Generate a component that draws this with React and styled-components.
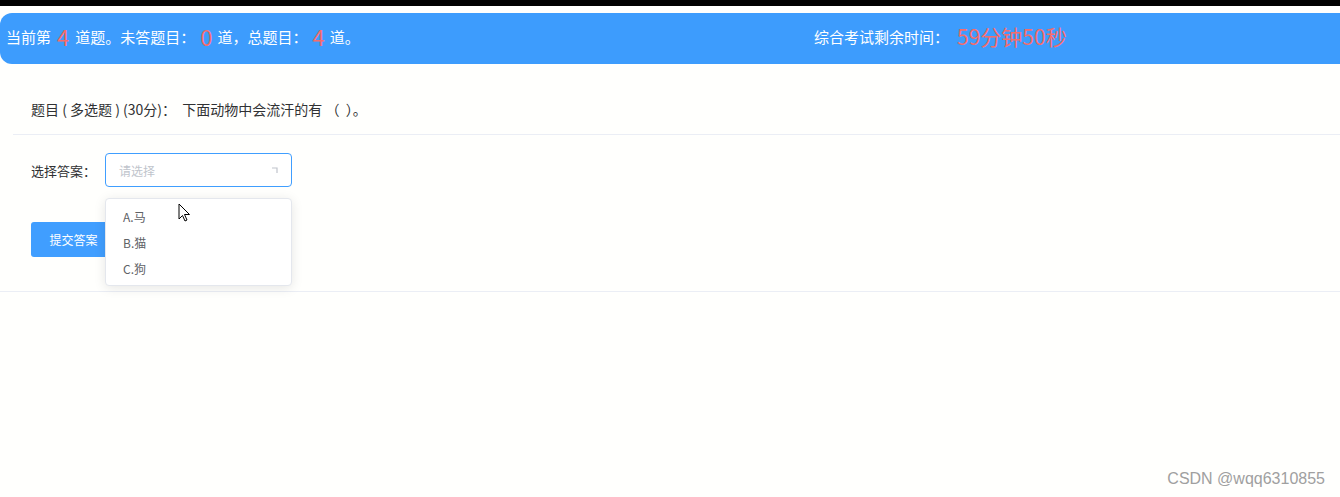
import React from 'react';
import styled, { createGlobalStyle } from 'styled-components';

const GlobalStyle = createGlobalStyle`
  body {
    margin: 0;
    background: #fff;
    font-family: "Noto Sans CJK SC", "Liberation Sans", sans-serif;
  }
`;

const Page = styled.div`
  position: relative;
  width: 1340px;
  height: 497px;
  overflow: hidden;
  background: #fffffd;
`;

const TopStrip = styled.div`
  height: 6px;
  background: #000;
  margin-bottom: 7px;
`;

const Header = styled.header`
  height: 51px;
  box-sizing: border-box;
  background: #3d9cfd;
  border-radius: 12px 0 0 12px;
  display: flex;
  align-items: center;
  padding: 0 0 5px 6px;
  color: #fff;
  font-size: 15px;
`;

const HeaderLeft = styled.div`
  flex: 0 0 808px;
  display: flex;
  align-items: center;
`;

const HeaderRight = styled.div`
  display: flex;
  align-items: center;
`;

const Num = styled.span`
  color: #f56c6c;
  font-size: ${p => p.$size || 22}px;
  margin: 0 ${p => p.$gap ?? 6}px;
  line-height: 1;
`;

const Section = styled.section`
  border-bottom: 1px solid #ebeef5;
`;

const QuestionRow = styled.div`
  margin-left: 13px;
  height: 71px;
  box-sizing: border-box;
  padding: 35px 18px 0;
  border-bottom: 1px solid #ebeef5;
  font-size: 14px;
  line-height: 20px;
  color: #303133;
  white-space: pre;
`;

const Form = styled.div`
  padding: 18px 0 34px 31px;
  display: flex;
  flex-direction: column;
  gap: 35px;
`;

const FormRow = styled.div`
  display: flex;
  align-items: center;
  position: relative;
`;

const Label = styled.label`
  width: 74px;
  font-size: 13px;
  color: #303133;
`;

const Select = styled.div`
  width: 187px;
  height: 34px;
  box-sizing: border-box;
  border: 1px solid #409eff;
  border-radius: 4px;
  display: flex;
  align-items: center;
  justify-content: space-between;
  padding: 0 12px 0 13px;
  font-size: 12px;
  color: #c0c4cc;
  background: #fff;
`;

const Dropdown = styled.ul`
  position: absolute;
  top: 45px;
  left: 74px;
  width: 187px;
  height: 88px;
  box-sizing: border-box;
  margin: 0;
  padding: 5px 0;
  list-style: none;
  background: #fff;
  border: 1px solid #e4e7ed;
  border-radius: 4px;
  box-shadow: 0 2px 12px rgba(0, 0, 0, 0.1);
  z-index: 2;
`;

const Option = styled.li`
  height: 26px;
  line-height: 26px;
  padding-left: 17px;
  font-size: 12px;
  color: #606266;
`;

const Button = styled.button`
  width: 85px;
  height: 35px;
  border: none;
  border-radius: 3px;
  background: #409eff;
  color: #fff;
  font-family: inherit;
  font-size: 12px;
  padding: 0;
`;

const Cursor = styled.svg`
  position: absolute;
  left: 178px;
  top: 203px;
  z-index: 3;
`;

const Watermark = styled.div`
  position: absolute;
  right: 15px;
  bottom: 9px;
  font-family: "Liberation Sans", Arial, sans-serif;
  font-size: 16px;
  color: #a0a0a0;
`;

export default function App() {
  return (
    <Page>
      <GlobalStyle />
      <TopStrip />
      <Header>
        <HeaderLeft>
          当前第<Num>4</Num>道题。未答题目：<Num $gap={5}>0</Num>道，总题目：<Num $gap={5}>4</Num>道。
        </HeaderLeft>
        <HeaderRight>
          综合考试剩余时间：<Num $size={21} $gap={8}>59分钟50秒</Num>
        </HeaderRight>
      </Header>
      <Section>
        <QuestionRow>{'题目 ( 多选题 ) (30分)：  下面动物中会流汗的有 （  ）。'}</QuestionRow>
        <Form>
          <FormRow>
            <Label>选择答案：</Label>
            <Select>
              请选择
              <svg width="8" height="8" viewBox="0 0 8 8">
                <path d="M1 2 H6 V7" fill="none" stroke="#c0c4cc" strokeWidth="1.2" />
              </svg>
            </Select>
            <Dropdown>
              <Option>A.马</Option>
              <Option>B.猫</Option>
              <Option>C.狗</Option>
            </Dropdown>
          </FormRow>
          <FormRow>
            <Button>提交答案</Button>
          </FormRow>
        </Form>
      </Section>
      <Cursor width="13" height="19" viewBox="0 0 13 19">
        <path d="M1 1 L1 16 L4.5 12.5 L7 18 L9 17 L6.5 11.5 L11.5 11.5 Z" fill="#fff" stroke="#000" strokeWidth="1" strokeLinejoin="round" />
      </Cursor>
      <Watermark>CSDN @wqq6310855</Watermark>
    </Page>
  );
}
